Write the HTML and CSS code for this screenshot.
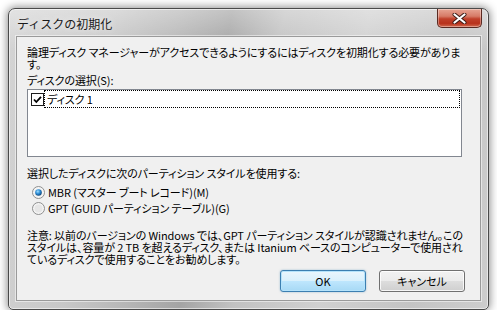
FILE: index.html
```html
<!DOCTYPE html>
<html lang="ja">
<head>
    <meta charset="UTF-8">
    <title>ディスクの初期化</title>
    <link rel="stylesheet" href="styles.css">
</head>
<body>

<div class="window">
    <div class="titlebar">
        <span class="title">ディスクの初期化</span>
        <button class="close-btn" aria-label="閉じる">
            <svg width="15" height="11" viewBox="0 0 15 11">
                <path d="M2.5 1.5 L12.5 9.5 M12.5 1.5 L2.5 9.5" stroke="#3a1a14" stroke-width="4" stroke-linecap="round"/>
                <path d="M2.5 1.5 L12.5 9.5 M12.5 1.5 L2.5 9.5" stroke="#fff" stroke-width="2.2" stroke-linecap="round"/>
            </svg>
        </button>
    </div>

    <div class="client">
        <p class="intro">論理ディスク マネージャーがアクセスできるようにするにはディスクを初期化する必要がありま<br>す。</p>

        <div class="label">ディスクの選択(S):</div>
        <div class="listbox">
            <div class="list-item">
                <svg class="check" width="13" height="13" viewBox="0 0 13 13">
                    <rect x="0.5" y="0.5" width="12" height="12" fill="#fff" stroke="#1c1c1c"/>
                    <path d="M3 6.5 L5.3 9 L10 3.8" fill="none" stroke="#000" stroke-width="1.8"/>
                </svg>
                <span class="item-text">ディスク 1</span>
            </div>
        </div>

        <div class="label style-label">選択したディスクに次のパーティション スタイルを使用する:</div>
        <div class="radio-row">
            <svg class="radio" width="13" height="13" viewBox="0 0 13 13">
                <defs>
                    <radialGradient id="dot" cx="0.4" cy="0.35" r="0.7">
                        <stop offset="0" stop-color="#9fe0ff"/>
                        <stop offset="0.5" stop-color="#2a8ad4"/>
                        <stop offset="1" stop-color="#0d3f6e"/>
                    </radialGradient>
                </defs>
                <circle cx="6.5" cy="6.5" r="6" fill="#f4f4f4" stroke="#8e8f8f"/>
                <circle cx="6.5" cy="6.5" r="3.3" fill="url(#dot)"/>
            </svg>
            <span>MBR (マスター ブート レコード)(M)</span>
        </div>
        <div class="radio-row">
            <svg class="radio" width="13" height="13" viewBox="0 0 13 13">
                <circle cx="6.5" cy="6.5" r="6" fill="#f4f4f4" stroke="#8e8f8f"/>
                <circle cx="6.5" cy="6.5" r="4" fill="#e6e6e6"/>
            </svg>
            <span>GPT (GUID パーティション テーブル)(G)</span>
        </div>

        <p class="note">注意: 以前のバージョンの Windows では、GPT パーティション スタイルが認識されません。この<br>スタイルは、容量が 2 TB を超えるディスク、または Itanium ベースのコンピューターで使用され<br>ているディスクで使用することをお勧めします。</p>

        <div class="buttons">
            <button class="btn btn-default">OK</button>
            <button class="btn">キャンセル</button>
        </div>
    </div>
</div>

</body>
</html>
```

FILE: styles.css
```css
body {
    margin: 0;
    background: #fff;
    font-family: "Noto Sans CJK JP", "Noto Sans", sans-serif;
    font-size: 11px;
    letter-spacing: -0.1px;
    color: #000;
}

.window {
    width: 465px;
    height: 300px;
    margin: 8px 0 0 8px;
    padding: 0 7px;
    border: 1px solid #4a4a4a;
    border-radius: 7px 7px 5px 5px;
    background:
        linear-gradient(to bottom, rgba(255,255,255,0.35), rgba(255,255,255,0) 40px),
        linear-gradient(100deg, #d4d4d4 0%, #c8c8c8 20%, #b6b6b6 32%, #a4a4a4 42%, #c2c2c2 52%, #d0d0d0 68%, #c4c4c4 85%, #cdcdcd 100%);
    box-shadow: 0 0 8px 1px rgba(0,0,0,0.45), inset 0 0 0 1px rgba(255,255,255,0.55);
}

.titlebar {
    height: 27px;
    display: flex;
    align-items: flex-start;
    justify-content: space-between;
}

.title {
    margin: 6px 0 0 1px;
    font-size: 12px;
    letter-spacing: 0;
    color: #1a1a1a;
    text-shadow: 0 0 6px rgba(255,255,255,0.9);
}

.close-btn {
    width: 45px;
    height: 19px;
    margin-right: -1px;
    padding: 0;
    border: 1px solid #5a2a22;
    border-top: none;
    border-radius: 0 0 5px 5px;
    background: linear-gradient(to bottom, #e7a493 0%, #d77b67 40%, #c0402a 55%, #b8321c 80%, #d26a4f 100%);
    box-shadow: inset 0 0 0 1px rgba(255,255,255,0.35);
    display: flex;
    align-items: center;
    justify-content: center;
}

.close-btn svg {
    display: block;
}

.client {
    height: 263px;
    padding: 0 0 0 10px;
    background: #f0f0f0;
    border: 1px solid #9a9a9a;
    box-shadow: 0 0 0 1px rgba(255,255,255,0.5);
    white-space: nowrap;
}

.intro {
    margin: 9px 0 0;
    line-height: 12px;
    font-feature-settings: "palt";
}

.label {
    margin-top: 4px;
    line-height: 12px;
    font-feature-settings: "palt";
}

.listbox {
    width: 433px;
    height: 66px;
    margin-top: 3px;
    border: 1px solid #828790;
    background: #fff;
}

.list-item {
    display: flex;
    align-items: center;
    height: 18px;
}

.check {
    margin-left: 3px;
    flex: none;
}

.item-text {
    flex: 1;
    height: 16px;
    margin-right: 1px;
    padding-left: 2px;
    border: 1px dotted #000;
    line-height: 16px;
    font-feature-settings: "palt";
}

.style-label {
    margin-top: 10px;
}

.radio-row {
    display: flex;
    align-items: center;
    gap: 3px;
    height: 16px;
    padding-left: 5px;
    font-feature-settings: "palt";
}

.style-label + .radio-row {
    margin-top: 5px;
}

.radio {
    flex: none;
}

.note {
    margin: 13px 0 0;
    line-height: 12px;
    font-feature-settings: "palt";
}

.buttons {
    display: flex;
    justify-content: flex-end;
    gap: 13px;
    margin: 5px 15px 0 0;
}

.btn {
    width: 86px;
    height: 22px;
    padding: 0;
    border: 1px solid #707070;
    border-radius: 3px;
    background: linear-gradient(to bottom, #f2f2f2 0%, #ebebeb 50%, #dddddd 51%, #cfcfcf 100%);
    box-shadow: inset 0 0 0 1px rgba(255,255,255,0.8);
    font-family: "Noto Sans CJK JP", "Noto Sans", sans-serif;
    font-size: 11px;
    font-feature-settings: "palt";
    color: #000;
}

.btn-default {
    border-color: #3c7fb1;
    background: linear-gradient(to bottom, #eaf6fd 0%, #d9f0fc 50%, #bee6fd 51%, #a7d9f5 100%);
    box-shadow: inset 0 0 0 1px #b5e3fb, 0 0 2px rgba(60,127,177,0.5);
}
```
